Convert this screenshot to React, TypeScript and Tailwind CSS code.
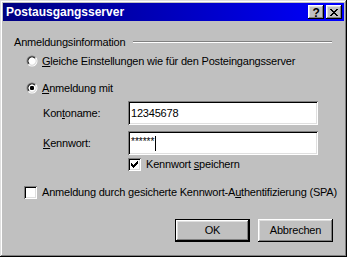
import React from 'react';

const raised =
  'shadow-[inset_-1px_-1px_#000000,inset_1px_1px_#ffffff,inset_-2px_-2px_#808080,inset_2px_2px_#dfdfdf]';
const sunken =
  'shadow-[inset_1px_1px_#808080,inset_-1px_-1px_#ffffff,inset_2px_2px_#000000,inset_-2px_-2px_#dfdfdf]';

const Radio: React.FC<{ checked?: boolean }> = ({ checked }) => (
  <svg width="12" height="12" viewBox="0 0 12 12" className="shrink-0">
    <circle cx="6" cy="6" r="5" fill="none" stroke="#808080" strokeWidth="1" strokeDasharray="15.7 15.7" transform="rotate(135 6 6)" />
    <circle cx="6" cy="6" r="5" fill="none" stroke="#ffffff" strokeWidth="1" strokeDasharray="15.7 15.7" transform="rotate(-45 6 6)" />
    <circle cx="6" cy="6" r="4" fill="#ffffff" />
    <circle cx="6" cy="6" r="4" fill="none" stroke="#000000" strokeWidth="1" strokeDasharray="12.6 12.6" transform="rotate(135 6 6)" />
    <circle cx="6" cy="6" r="4" fill="none" stroke="#dfdfdf" strokeWidth="1" strokeDasharray="12.6 12.6" transform="rotate(-45 6 6)" />
    {checked && <rect x="4" y="4" width="4" height="4" rx="1.2" fill="#000000" />}
  </svg>
);

const Checkbox: React.FC<{ checked?: boolean }> = ({ checked }) => (
  <div className={`relative w-[13px] h-[13px] shrink-0 bg-white ${sunken}`}>
    {checked && (
      <svg width="13" height="13" viewBox="0 0 13 13" className="absolute left-0 top-0">
        <path d="M3 5h1v1h1v1h1V6h1V5h1V4h1V3h1v3h-1v1h-1v1h-1v1h-1v1H5V9H4V8H3z" fill="#000000" />
      </svg>
    )}
  </div>
);

const TitleButton: React.FC<{ children: React.ReactNode }> = ({ children }) => (
  <div className={`w-[16px] h-[14px] bg-[#c0c0c0] flex items-center justify-center ${raised}`}>
    {children}
  </div>
);

const Button: React.FC<{ label: string; isDefault?: boolean }> = ({ label, isDefault }) => (
  <div
    className={`w-[75px] h-[23px] bg-[#c0c0c0] flex items-center justify-center ${
      isDefault
        ? 'shadow-[inset_0_0_0_1px_#000000,inset_-2px_-2px_#000000,inset_2px_2px_#ffffff,inset_-3px_-3px_#808080,inset_3px_3px_#dfdfdf]'
        : raised
    }`}
  >
    {label}
  </div>
);

export default function App() {
  return (
    <div
      className="w-[347px] h-[257px] bg-[#c0c0c0] p-[3px] text-[11px] tracking-[-0.2px] whitespace-nowrap leading-none text-black shadow-[inset_-1px_-1px_#000000,inset_1px_1px_#dfdfdf,inset_-2px_-2px_#808080,inset_2px_2px_#ffffff]"
      style={{ fontFamily: '"Liberation Sans", Arial, sans-serif' }}
    >
      <div className="h-[18px] bg-gradient-to-r from-[#000080] to-[#0000ff] flex items-center pl-[3px] pr-[2px]">
        <span className="text-white font-bold text-[12px] tracking-normal flex-1">Postausgangsserver</span>
        <div className="flex gap-[2px]">
          <TitleButton>
            <span className="font-bold text-[12px] leading-none mt-[1px]">?</span>
          </TitleButton>
          <TitleButton>
            <svg width="8" height="7" viewBox="0 0 8 7">
              <path d="M0 0h2v1h1v1h2V1h1V0h2v1H7v1H6v1H5v1h1v1h1v1h1v1H6V6H5V5H3v1H2v1H0V6h1V5h1V4h1V3H2V2H1V1H0z" fill="#000000" />
            </svg>
          </TitleButton>
        </div>
      </div>

      <div className="mt-[14px] h-[14px] flex items-center pl-[11px] pr-[12px]">
        <span>Anmeldungsinformation</span>
        <div className="flex-1 ml-[8px] h-[2px] border-t border-t-[#808080] border-b border-b-white" />
      </div>

      <div className="mt-[5px] h-[14px] flex items-center gap-[4px] pl-[23px]">
        <Radio />
        <span>
          <u>G</u>leiche Einstellungen wie für den Posteingangsserver
        </span>
      </div>

      <div className="mt-[13px] h-[14px] flex items-center gap-[4px] pl-[23px]">
        <Radio checked />
        <span>
          <u>A</u>nmeldung mit
        </span>
      </div>

      <div className="mt-[6px] h-[24px] flex items-center pl-[40px]">
        <span className="w-[85px]">
          Kon<u>t</u>oname:
        </span>
        <div className={`w-[190px] h-[24px] bg-white flex items-center pl-[3px] ${sunken}`}>12345678</div>
      </div>

      <div className="mt-[6px] h-[24px] flex items-center pl-[40px]">
        <span className="w-[85px]">
          <u>K</u>ennwort:
        </span>
        <div className={`w-[190px] h-[24px] bg-white flex items-center pl-[3px] ${sunken}`}>
          <span className="text-[10px] tracking-normal mt-[-3px]">******</span>
          <span className="w-px h-[15px] bg-black ml-[1px]" />
        </div>
      </div>

      <div className="mt-[3px] h-[13px] flex items-center gap-[5px] pl-[125px]">
        <Checkbox checked />
        <span>
          Kennwort <u>s</u>peichern
        </span>
      </div>

      <div className="mt-[15px] h-[13px] flex items-center gap-[5px] pl-[21px]">
        <Checkbox />
        <span>
          Anmeldung durch gesicherte Kennwort-A<u>u</u>thentifizierung (SPA)
        </span>
      </div>

      <div className="mt-[20px] flex gap-[8px] pl-[172px]">
        <Button label="OK" isDefault />
        <Button label="Abbrechen" />
      </div>
    </div>
  );
}
